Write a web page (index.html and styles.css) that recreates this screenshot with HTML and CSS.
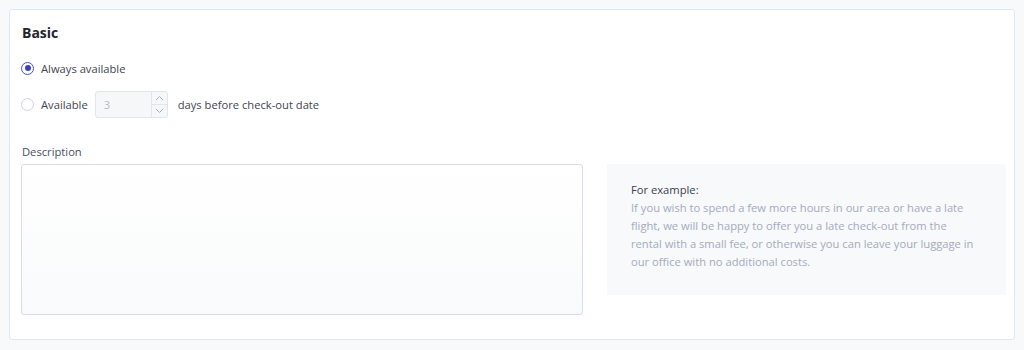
FILE: index.html
```html
<!DOCTYPE html>
<html>
<head>
<meta charset="utf-8"/>
<title>Late check-out</title>
<link rel="stylesheet" href="styles.css">
</head>
<body>
<div class="card">
	<h3 class="card-title">Basic</h3>
	<div class="option">
		<span class="radio checked"></span>
		<span class="option-text">Always available</span>
	</div>
	<div class="option">
		<span class="radio"></span>
		<span class="option-text">Available</span>
		<div class="num-input">
			<span class="num-value">3</span>
			<div class="spin">
				<span class="spin-btn"><svg width="9" height="6" viewBox="0 0 9 6"><path d="M1 5 L4.5 1.5 L8 5" fill="none" stroke="#a9b0bf" stroke-width="1"/></svg></span>
				<span class="spin-btn"><svg width="9" height="6" viewBox="0 0 9 6"><path d="M1 1 L4.5 4.5 L8 1" fill="none" stroke="#a9b0bf" stroke-width="1"/></svg></span>
			</div>
		</div>
		<span class="option-text">days before check-out date</span>
	</div>
	<div class="desc-row">
		<div class="desc-col">
			<label class="desc-label">Description</label>
			<textarea class="desc-input"></textarea>
		</div>
		<div class="example">
			<p class="example-title">For example:</p>
			<p class="example-text">If you wish to spend a few more hours in our area or have a late<br>flight, we will be happy to offer you a late check-out from the<br>rental with a small fee, or otherwise you can leave your luggage in<br>our office with no additional costs.</p>
		</div>
	</div>
</div>
</body>
</html>
```

FILE: styles.css
```css
html,body{margin:0;padding:0;}
body{background-color:#f7f9fb;padding:9px 9px 0;font-family:"Open Sans",Arial,sans-serif;font-size:11.2px;color:#3d4250;}
.card{background-color:#fff;border:1px solid #dfe7f0;border-radius:3px;padding:13px 8px 24px 11px;width:985px;}
.card-title{margin:0 0 0 1px;font-size:14px;line-height:20px;font-weight:700;color:#22252d;}
.option{display:flex;align-items:center;height:26px;margin-top:12px;}
.option + .option{margin-top:10px;}
.radio{width:11px;height:11px;border:1px solid #cfd3dc;border-radius:50%;margin-left:0;margin-right:7px;position:relative;background:#fff;}
.radio.checked{border-color:#4b50c6;}
.radio.checked:after{content:"";position:absolute;left:2.5px;top:2.5px;width:6px;height:6px;border-radius:50%;background-color:#3a3fc0;}
.option-text{color:#3f4452;}
.num-input{display:flex;width:71px;height:25px;margin:0 10px 0 7px;border:1px solid #e1e5ec;border-radius:3px;background-color:#f5f7f9;}
.num-value{flex:1;padding-left:8px;line-height:25px;color:#b4bac6;}
.spin{width:15px;border-left:1px solid #e1e5ec;display:flex;flex-direction:column;}
.spin-btn{flex:1;display:flex;align-items:center;justify-content:center;}
.spin-btn + .spin-btn{border-top:1px solid #e1e5ec;}
.desc-row{display:flex;gap:24px;margin-top:26px;}
.desc-col{width:562px;display:flex;flex-direction:column;}
.desc-label{line-height:18px;color:#4a4f5c;margin-left:1px;margin-bottom:3px;}
.desc-input{box-sizing:border-box;width:562px;height:151px;border:1px solid #d9dbe8;border-radius:3px;background:linear-gradient(#ffffff,#f9fafb);resize:none;margin:0;}
.example{flex:1;margin-top:21px;height:131px;box-sizing:border-box;background-color:#f7f9fb;padding:17px 12px 16px 24px;white-space:nowrap;}
.example p{margin:0;line-height:18px;}
.example-title{color:#3a3f4d;}
.example-text{color:#a3abbd;}
```
